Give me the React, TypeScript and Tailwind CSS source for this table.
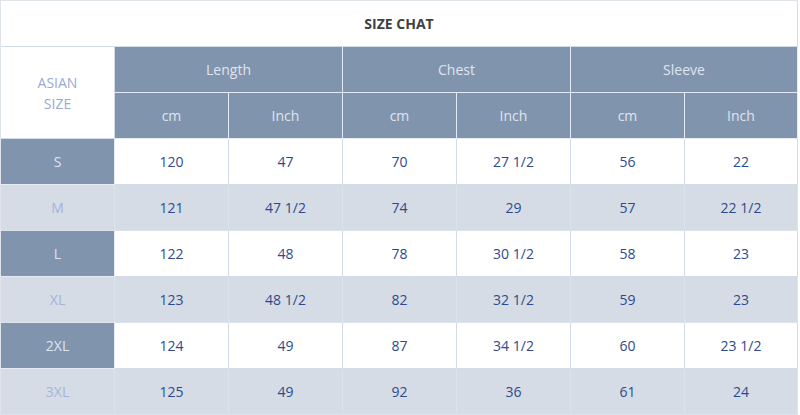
const rows = [
  ["S", "120", "47", "70", "27 1/2", "56", "22"],
  ["M", "121", "47 1/2", "74", "29", "57", "22 1/2"],
  ["L", "122", "48", "78", "30 1/2", "58", "23"],
  ["XL", "123", "48 1/2", "82", "32 1/2", "59", "23"],
  ["2XL", "124", "49", "87", "34 1/2", "60", "23 1/2"],
  ["3XL", "125", "49", "92", "36", "61", "24"],
];

const cell = "flex items-center justify-center border-r border-b border-[#d3dbe9] h-[46px]";

export default function App() {
  return (
    <div className="w-[800px] h-[415px] bg-white font-['Open_Sans',sans-serif] text-[14px]">
      <div className="w-[798px] border-t border-l border-[#dfe3ea]">
        <div className="flex items-center justify-center h-[46px] border-b border-r border-[#d3dbe9] font-bold text-[#404040] text-[14px]">
          SIZE CHAT
        </div>
        <div className="grid grid-cols-[114px_114px_114px_114px_114px_114px_113px]">
          <div className={`${cell} row-span-2 h-[92px] flex-col bg-white text-[#98a9d6] leading-[21px]`}>
            <span>ASIAN</span>
            <span>SIZE</span>
          </div>
          {["Length", "Chest", "Sleeve"].map((h) => (
            <div key={h} className={`${cell} col-span-2 bg-[#8194ae] text-[#dfe4ee] border-[#e4ebf7]`}>
              {h}
            </div>
          ))}
          {["cm", "Inch", "cm", "Inch", "cm", "Inch"].map((h, i) => (
            <div key={i} className={`${cell} bg-[#8194ae] text-[#dfe4ee] border-[#e4ebf7]`}>
              {h}
            </div>
          ))}
          {rows.map((r, ri) =>
            r.map((v, ci) => {
              const odd = ri % 2 === 1;
              let cls = odd ? "bg-[#d6dce5] border-[#dde3ec]" : "bg-white";
              let txt = "text-[#2e4a8c]";
              if (ci === 0) {
                cls = odd ? "bg-[#d6dce5] border-[#dde3ec]" : "bg-[#8194ae] border-[#e4ebf7]";
                txt = odd ? "text-[#a3b3dc]" : "text-[#dfe4ee]";
              }
              return (
                <div key={`${ri}-${ci}`} className={`${cell} ${cls} ${txt}`}>
                  {v}
                </div>
              );
            })
          )}
        </div>
      </div>
    </div>
  );
}
